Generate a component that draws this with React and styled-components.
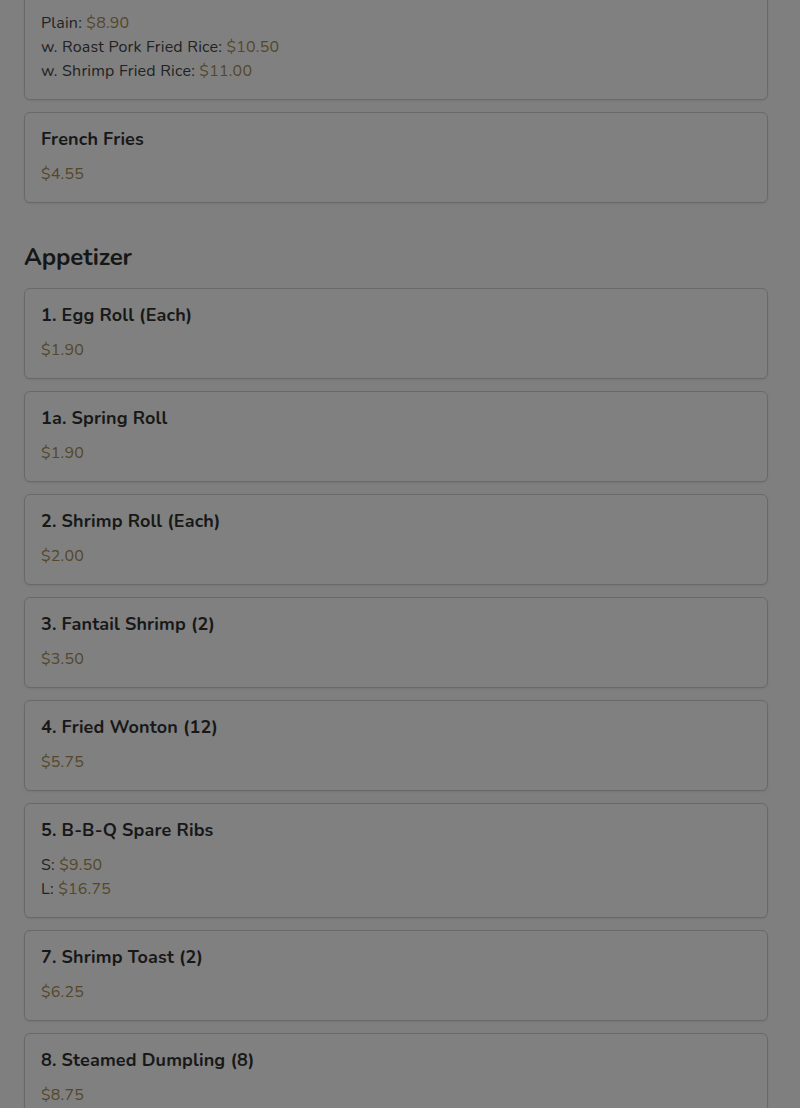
import React from 'react'
import styled, { createGlobalStyle } from 'styled-components'

const GlobalStyle = createGlobalStyle`
  html, body {
    margin: 0;
    padding: 0;
    background: #7f7f7f;
  }
  body {
    font-family: Nunito, Lato, "Open Sans", sans-serif;
    color: #1b1b1b;
    overflow: hidden;
  }
`

const Page = styled.div`
  padding: 0 32px 0 24px;
  margin-top: -18px;
`

const Section = styled.section`
  & + & {
    margin-top: 40px;
  }
`

const SectionTitle = styled.h2`
  margin: 0 0 16px;
  font-size: 24px;
  line-height: 29px;
  font-weight: 700;
  letter-spacing: -0.1px;
  color: #161616;
`

const List = styled.div`
  display: flex;
  flex-direction: column;
  gap: 12px;
`

const Card = styled.div`
  border: 1px solid #696969;
  border-radius: 6px;
  background: #808080;
  padding: 16px;
  box-shadow: 0 1px 2px rgba(0, 0, 0, 0.08);
`

const ItemName = styled.h3`
  margin: 0;
  font-size: 18px;
  line-height: 21px;
  font-weight: 700;
  letter-spacing: 0.15px;
  color: #181818;
`

const Prices = styled.div`
  margin-top: 12px;
  display: flex;
  flex-direction: column;
`

const PriceRow = styled.div`
  font-size: 16px;
  line-height: 24px;
  letter-spacing: 0.2px;
  color: #222;
`

const Price = styled.span`
  color: #54472a;
`

const menu = [
  {
    items: [
      {
        prices: [
          ['Plain', '$8.90'],
          ['w. Roast Pork Fried Rice', '$10.50'],
          ['w. Shrimp Fried Rice', '$11.00'],
        ],
      },
      { name: 'French Fries', prices: [[null, '$4.55']] },
    ],
  },
  {
    title: 'Appetizer',
    items: [
      { name: '1. Egg Roll (Each)', prices: [[null, '$1.90']] },
      { name: '1a. Spring Roll', prices: [[null, '$1.90']] },
      { name: '2. Shrimp Roll (Each)', prices: [[null, '$2.00']] },
      { name: '3. Fantail Shrimp (2)', prices: [[null, '$3.50']] },
      { name: '4. Fried Wonton (12)', prices: [[null, '$5.75']] },
      {
        name: '5. B-B-Q Spare Ribs',
        prices: [
          ['S', '$9.50'],
          ['L', '$16.75'],
        ],
      },
      { name: '7. Shrimp Toast (2)', prices: [[null, '$6.25']] },
      { name: '8. Steamed Dumpling (8)', prices: [[null, '$8.75']] },
    ],
  },
]

const App = () => {
  return (
    <>
      <GlobalStyle />
      <Page>
        {menu.map((section, i) => (
          <Section key={i}>
            {section.title && <SectionTitle>{section.title}</SectionTitle>}
            <List>
              {section.items.map((item, j) => (
                <Card key={j}>
                  {item.name && <ItemName>{item.name}</ItemName>}
                  <Prices>
                    {item.prices.map(([label, value]) => (
                      <PriceRow key={value}>
                        {label && `${label}: `}
                        <Price>{value}</Price>
                      </PriceRow>
                    ))}
                  </Prices>
                </Card>
              ))}
            </List>
          </Section>
        ))}
      </Page>
    </>
  )
}

export default App
